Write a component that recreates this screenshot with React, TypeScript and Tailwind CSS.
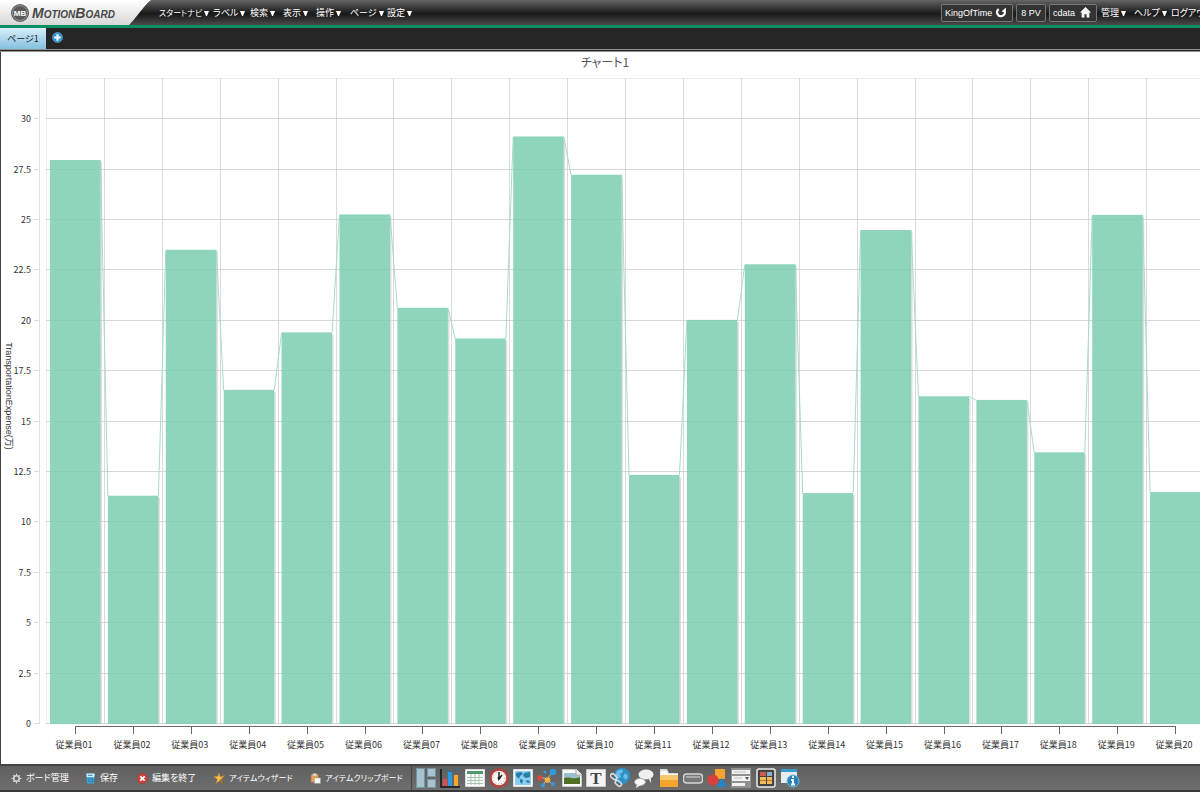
import React from "react";
import { useState } from "react";

const menus = [
  { label: "スタートナビ", size: "w-[54px] text-[8px]" },
  { label: "ラベル", size: "w-[37px] text-[9px]" },
  { label: "検索", size: "w-[33px] text-[9px]" },
  { label: "表示", size: "w-[33px] text-[9px]" },
  { label: "操作", size: "w-[34px] text-[9px]" },
  { label: "ページ", size: "w-[37px] text-[9px]" },
  { label: "設定", size: "w-[33px] text-[9px]" },
];

// values are in units of 10,000
const employees = [
  { name: "従業員01", value: 27.95 },
  { name: "従業員02", value: 11.3 },
  { name: "従業員03", value: 23.5 },
  { name: "従業員04", value: 16.55 },
  { name: "従業員05", value: 19.4 },
  { name: "従業員06", value: 25.25 },
  { name: "従業員07", value: 20.62 },
  { name: "従業員08", value: 19.1 },
  { name: "従業員09", value: 29.12 },
  { name: "従業員10", value: 27.22 },
  { name: "従業員11", value: 12.33 },
  { name: "従業員12", value: 20.02 },
  { name: "従業員13", value: 22.78 },
  { name: "従業員14", value: 11.43 },
  { name: "従業員15", value: 24.48 },
  { name: "従業員16", value: 16.23 },
  { name: "従業員17", value: 16.05 },
  { name: "従業員18", value: 13.45 },
  { name: "従業員19", value: 25.23 },
  { name: "従業員20", value: 11.48 },
];

const ticks = [0, 2.5, 5, 7.5, 10, 12.5, 15, 17.5, 20, 22.5, 25, 27.5, 30];

const BASE = 672;
const STEP = 57.9;
const yOf = (value: number) => BASE - value * 20.16;
const xOf = (index: number) => 50 + index * STEP;

const Chart = () => (
  <svg
    className="block w-full"
    viewBox="0 0 1200 712"
    role="img"
    aria-label="チャート1"
    fontFamily="'Noto Sans CJK JP', sans-serif"
    fontSize="9"
    fill="#333"
  >
    <text x="605" y="15" textAnchor="middle" fontSize="12" fill="#555">
      チャート1
    </text>
    <text
      transform="translate(6 344) rotate(90)"
      textAnchor="middle"
      fontFamily="'Liberation Sans', 'Noto Sans CJK JP', sans-serif"
    >
      TransportationExpense(万)
    </text>

    <path d="M46 26.500H1200M46.500 26V672" stroke="#eee" fill="none" />
    <path d="M39.500 26V672" stroke="#e2e2e2" />
    {ticks.map((tick) => (
      <g key={tick}>
        <path d={`M34 ${Math.round(yOf(tick)) - 0.5}h6`} stroke="#ddd" />
        <path
          d={`M46 ${Math.round(yOf(tick)) - 0.5}H1200`}
          stroke="#dedede"
        />
        <text x="31" y={Math.round(yOf(tick)) + 3} textAnchor="end">
          {tick}
        </text>
      </g>
    ))}
    {employees.slice(1).map((employee, i) => (
      <path
        key={employee.name}
        d={`M${Math.round(46 + (i + 1) * STEP) + 0.5} 26V672`}
        stroke="#dadada"
      />
    ))}

    {employees.map((employee, i) => {
      const x = xOf(i);
      const y = yOf(employee.value) - 0.5;
      const next = employees[i + 1];
      return (
        <g key={employee.name}>
          <rect x={x + 50} y={y + 2} width="2" height={BASE - y - 2} fill="#dedede" />
          <rect x={x} y={y} width="50.5" height={BASE - y} fill="#8fd5bc" />
          {next && (
            <path
              d={`M${x + 50.5} ${y}L${xOf(i + 1)} ${yOf(next.value)}`}
              stroke="#a5dcc8"
            />
          )}
          <path d={`M${Math.round(x) + 25.5} 674v8`} stroke="#666" />
          <text x={x + 24} y="696" textAnchor="middle">
            {employee.name}
          </text>
        </g>
      );
    })}
    {ticks.map((tick) => (
      <path
        key={tick}
        d={`M46 ${Math.round(yOf(tick)) - 0.5}H1200`}
        stroke="#000"
        strokeOpacity="0.03"
      />
    ))}
    <path d="M75 674.500H1175.500" stroke="#666" />
  </svg>
);

const Icon = ({
  children,
  className = "size-5",
}: {
  children: React.ReactNode;
  className?: string;
}) => (
  <svg className={`${className} shrink-0`} viewBox="0 0 20 20" fill="none" aria-hidden="true">
    {children}
  </svg>
);

const Caret = () => (
  <svg className="ml-0.5 inline-block h-[5px] w-[5px]" viewBox="0 0 5 5" aria-hidden="true">
    <path d="M0 0h5L3 5H2z" fill="white" />
  </svg>
);

const commands = [
  {
    label: "ボード管理",
    size: "w-[74px] text-[9px]",
    icon: (
      <Icon className="size-[11px]">
        <circle cx="10" cy="10" r="5" stroke="#d5d5d5" strokeWidth="3" />
        <path
          d="M10 1v4M10 15v4M1 10h4M15 10h4M4 4l2 2M14 14l2 2M16 4l-2 2M4 16l2-2"
          stroke="#d5d5d5"
          strokeWidth="2"
        />
      </Icon>
    ),
  },
  {
    label: "保存",
    size: "w-[52px] text-[9px]",
    icon: (
      <Icon className="size-[11px]">
        <path d="M2 1h16l-2 18H4z" fill="#48a9dc" />
        <path d="M3 1h14v6H3z" fill="#e9f7ff" />
        <path d="M5 4h9M7 11h7v5H7z" stroke="#267fae" strokeWidth="2" />
      </Icon>
    ),
  },
  {
    label: "編集を終了",
    size: "w-[77px] text-[9px]",
    icon: (
      <Icon className="size-[11px]">
        <circle cx="10" cy="10" r="9" fill="#d34340" stroke="#ac2929" />
        <path d="M6 6l8 8M14 6l-8 8" stroke="white" strokeWidth="3" />
      </Icon>
    ),
  },
  {
    label: "アイテムウィザード",
    size: "w-[96px] text-[8px]",
    icon: (
      <Icon className="size-[11px]">
        <path
          d="M9 0l2 7 8-2-6 6 4 8-7-5-6 5 2-8-6-4 7-1z"
          fill="#f5c24b"
          stroke="#be8526"
        />
        <path d="M11 12l7 7" stroke="#80592b" strokeWidth="2" />
      </Icon>
    ),
  },
  {
    label: "アイテムクリップボード",
    size: "w-[101px] text-[8px]",
    icon: (
      <Icon className="size-[11px]">
        <path d="M2 3h13v14H2z" fill="#e4a358" stroke="#b97b37" />
        <path d="M5 1h7v4H5z" fill="#ddd" />
        <path d="M8 9h11v10H8z" fill="#f7f7f7" stroke="#999" />
      </Icon>
    ),
  },
];

const items = [
  {
    label: "レイアウト",
    icon: (
      <>
        <path d="M0 0h9v20H0zM11 0h9v9h-9zM11 11h9v9h-9z" fill="#a6c3cf" />
        <path d="M.5.5h8v19h-8zM11.500.5h8v8h-8zM11.500 11.500h8v8h-8z" stroke="#7795a1" />
      </>
    ),
  },
  {
    label: "チャート",
    icon: (
      <>
        <path d="M3 11h4v7H3z" fill="#df4a45" />
        <path d="M8 4h4v14H8z" fill="#269be4" />
        <path d="M14 7h4v11h-4z" fill="#f5a62d" />
        <path d="M1 1v18h19" stroke="#151515" strokeWidth="1.500" />
        <path d="M3 5l4-3 4 2 4-2 4-2" stroke="#31718f" />
      </>
    ),
  },
  {
    label: "明細",
    icon: (
      <>
        <path d="M.5 1.500h19v17H.5z" fill="#fafafa" stroke="#ddd" />
        <path d="M2 3h16v3H2z" fill="#4f9a6b" />
        <path d="M2 9.500h16M2 12.500h16M2 15.500h16M6 6v11M10 6v11M14 6v11" stroke="#a6c4b0" />
      </>
    ),
  },
  {
    label: "時計",
    icon: (
      <>
        <circle cx="10" cy="10" r="8.500" fill="#f8f8f4" stroke="#b9403b" strokeWidth="2.500" />
        <circle cx="10" cy="10" r="6" stroke="#aaa" strokeDasharray="1 2" />
        <path d="M10 4v7l3-4" stroke="#222" strokeWidth="1.500" />
        <circle cx="10" cy="10" r="1.500" fill="#222" />
      </>
    ),
  },
  {
    label: "マップ",
    icon: (
      <>
        <path d="M.5 1.500h19v17H.5z" fill="#f8f8f8" stroke="#ddd" />
        <path d="M2 3h16v14H2z" fill="#8dccef" />
        <path d="M3 5l5-1 2 2-3 2-1 3-3-3zM11 5l6-1v5l-4 1-3-2zM7 11l3 1-1 4-2-2zM14 12l3 1-1 2-3-1z" fill="#247eac" />
      </>
    ),
  },
  {
    label: "ネットワーク",
    icon: (
      <>
        <path d="M3 9l7 2 6-7M10 11l5 5M10 11l-4 6" stroke="#b7bec2" />
        <circle cx="3" cy="10" r="2.800" fill="#dc4944" />
        <circle cx="10.500" cy="12" r="2.800" fill="#f4b43e" />
        <circle cx="16" cy="4" r="3.300" fill="#309bdd" />
        <circle cx="16" cy="16" r="2" fill="#309bdd" />
        <circle cx="6" cy="17.500" r="2" fill="#309bdd" />
        <circle cx="8" cy="4" r="1.500" fill="#309bdd" />
      </>
    ),
  },
  {
    label: "画像",
    icon: (
      <>
        <path d="M.5 1.500h14l5 5v12H.5z" fill="#f8f8f8" stroke="#ccc" />
        <path d="M2 5h12l4 3v3H2z" fill="#9bbfcd" />
        <path d="M2 10c5-2 10 2 16-1v7H2z" fill="#4e7023" />
        <path d="M14 1v6h6" fill="#eee" stroke="#aaa" />
      </>
    ),
  },
  {
    label: "テキスト",
    icon: (
      <>
        <path d="M.5 1.500h19v17H.5z" fill="#f4f4f4" stroke="#ccc" />
        <text
          x="10"
          y="16"
          textAnchor="middle"
          fontFamily="'Liberation Serif', serif"
          fontWeight="700"
          fontSize="17"
          fill="#444"
        >
          T
        </text>
      </>
    ),
  },
  {
    label: "リンク",
    icon: (
      <>
        <circle cx="12" cy="8" r="8" fill="#2c91cb" />
        <path d="M7 3l5-2 1 3-3 2 1 3-3 2-3-3zM15 5l3 3-2 4-3-3z" fill="#6dbbe6" />
        <rect x="0" y="7" width="7" height="4" rx="2" transform="rotate(40 4 9)" stroke="#ddd" strokeWidth="1.500" />
        <rect x="5" y="13" width="7" height="4" rx="2" transform="rotate(40 8 15)" stroke="#ddd" strokeWidth="1.500" />
        <path d="M5 11l2 2" stroke="#ddd" strokeWidth="1.500" />
      </>
    ),
  },
  {
    label: "コメント",
    icon: (
      <>
        <ellipse cx="12" cy="6.500" rx="7.500" ry="5" fill="#f0f0f0" />
        <path d="M14 10l3 5v-6" fill="#e4e4e4" />
        <ellipse cx="6" cy="14" rx="5.500" ry="3.500" fill="#fafafa" stroke="#aaa" />
        <path d="M3 16l-1 4 5-3" fill="#eee" />
      </>
    ),
  },
  {
    label: "フォルダ",
    icon: (
      <>
        <path d="M1 1h7l2 4h9v14H1z" fill="#d9dcda" />
        <path d="M2 3h5l2 3h10v2H1z" fill="#fff" />
        <path d="M1 7h18v12H1z" fill="#f5a52d" />
        <path d="M1 7h18v5H1z" fill="#fac66d" />
      </>
    ),
  },
  {
    label: "ボタン",
    icon: (
      <>
        <rect x=".5" y="6" width="19" height="9" rx="3" fill="#777" stroke="#d5d5d5" strokeWidth="1.500" />
        <path d="M3 8h14v2H3z" fill="#aaa" />
      </>
    ),
  },
  {
    label: "図形",
    icon: (
      <>
        <path d="M8 1h10v10H8z" fill="#f5a52d" />
        <circle cx="6" cy="12" r="5.500" fill="#d9403d" />
        <path d="M15 10l5 9H9z" fill="#2784c7" />
      </>
    ),
  },
  {
    label: "入力フォーム",
    icon: (
      <>
        <path d="M0 0h20v20H0z" fill="#909090" />
        <path d="M1 2h18v4H1zM1 8h18v5H1zM1 15h13v3H1z" fill="#f2f2f2" />
        <path d="M14 9h4l-2 3z" fill="#555" />
        <path d="M3 4h12M3 10h8" stroke="#bbb" />
      </>
    ),
  },
  {
    label: "パネル",
    icon: (
      <>
        <rect x="1" y="1" width="18" height="18" rx="2" fill="#444" stroke="#ededed" strokeWidth="1.500" />
        <path d="M4 4h6v4H4z" fill="#d25b50" />
        <path d="M11 4h5v4h-5z" fill="#80b4d3" />
        <path d="M4 9h6v7H4zM11 9h5v7h-5z" fill="#f5ba59" />
        <path d="M4 12.500h6M11 12.500h5" stroke="#b77b29" />
      </>
    ),
  },
  {
    label: "情報",
    icon: (
      <>
        <path d="M1 1h16v14H1z" fill="#e6edf0" />
        <path d="M1 1h16v3H1z" fill="#3a9bcf" />
        <circle cx="13" cy="13" r="6" fill="#2782bc" stroke="#77badf" />
        <path d="M13 8v2M11 12h2v5M11 16.500h4" stroke="white" strokeWidth="1.800" />
      </>
    ),
  },
];

const Logo = () => (
  <a href="#" className="relative flex h-[26px] w-[151px] shrink-0 items-center gap-[3px] pl-[11px]">
    <svg className="absolute inset-0 size-full" viewBox="0 0 151 26" aria-hidden="true">
      <defs>
        <linearGradient id="plate" x1="0" y1="0" x2="0" y2="1">
          <stop stopColor="#fff" />
          <stop offset="1" stopColor="#d6d6d6" />
        </linearGradient>
      </defs>
      <path d="M0 0h151c-5 3-17 21-23 26H0z" fill="url(#plate)" />
    </svg>
    <svg className="relative size-[18px] shrink-0" viewBox="0 0 18 18" aria-hidden="true">
      <circle cx="9" cy="9" r="9" fill="#5b5b5b" />
      <circle cx="9" cy="9" r="7.500" fill="none" stroke="#aaa" strokeWidth=".7" />
      <text
        x="9"
        y="12"
        textAnchor="middle"
        fontFamily="'Liberation Sans', sans-serif"
        fontSize="8"
        fontWeight="700"
        fill="white"
      >
        MB
      </text>
    </svg>
    <span className="relative font-['Liberation_Sans',sans-serif] text-[14px] leading-4 font-bold text-[#484848] italic [font-variant:small-caps]">
      MotionBoard
    </span>
  </a>
);

const Header = () => (
  <header className="flex h-7 shrink-0 items-start overflow-hidden border-b-3 border-[#0a8f63] bg-linear-to-b from-[#666] via-[#191919] via-55% to-[#4b4b4b]">
    <Logo />
    <nav className="flex h-[25px] shrink-0 pl-2">
      {menus.map((menu) => (
        <button key={menu.label} className={`${menu.size} shrink-0 text-left whitespace-nowrap`}>
          {menu.label}
          <Caret />
        </button>
      ))}
    </nav>
    <div className="ml-auto flex h-[25px] shrink-0 items-center whitespace-nowrap">
      <button className="mr-[3px] flex h-[18px] w-[72px] items-center justify-between rounded-xs border border-[#777] bg-[#333] pr-[5px] pl-[3px] font-['Liberation_Sans',sans-serif]">
        KingOfTime
        <Icon className="size-[11px]">
          <path d="M5 4a7 7 0 1 0 11 5" stroke="white" strokeWidth="4" />
          <path d="M10 8l8-7v9z" fill="white" />
        </Icon>
      </button>
      <button className="mr-[3px] h-[18px] w-[30px] rounded-xs border border-[#777] bg-[#333] font-['Liberation_Sans',sans-serif]">
        8 PV
      </button>
      <button className="mr-1 flex h-[18px] w-12 items-center justify-between rounded-xs border border-[#777] bg-[#333] pr-[5px] pl-[3px] font-['Liberation_Sans',sans-serif]">
        cdata
        <Icon className="size-[11px]">
          <path d="M10 0L0 10h3v9h5v-6h4v6h5v-9h3z" fill="white" />
        </Icon>
      </button>
      <button className="w-[33px] text-left">
        管理
        <Caret />
      </button>
      <button className="w-[37px] text-left">
        ヘルプ
        <Caret />
      </button>
      <a href="#" className="w-[29px] overflow-hidden">
        ログアウト
      </a>
    </div>
  </header>
);

const App = () => {
  const [page, setPage] = useState(1);

  return (
    <div className="flex min-h-screen flex-col bg-white font-['Noto_Sans_CJK_JP',sans-serif] text-[9px] leading-3 text-white [font-feature-settings:'palt']">
      <Header />
      <div className="flex h-6 shrink-0 items-stretch border-b-3 border-double border-[#929292] bg-[#262626]">
        <button
          aria-pressed={page === 1}
          className="w-[46px] bg-linear-to-b from-[#d8effa] to-[#83c0e0] text-[#222]"
          onClick={() => setPage(1)}
        >
          ページ1
        </button>
        <button aria-label="ページを追加" className="ml-1.5 flex items-center pb-0.5">
          <Icon className="size-[11px]">
            <circle cx="10" cy="10" r="9" fill="#258ed0" stroke="#85c8ef" />
            <path d="M10 4v12M4 10h12" stroke="white" strokeWidth="4" />
          </Icon>
        </button>
      </div>
      <main className="flex-1 shadow-[inset_1px_0_#444]">
        <Chart />
      </main>
      <footer className="flex h-7 shrink-0 items-center overflow-hidden border-y-2 border-t-[#444] border-b-[#383838] bg-linear-to-b from-[#606060] to-[#6e6e6e] pl-[11px]">
        <div className="flex h-full shrink-0 items-center border-r border-[#444]">
          {commands.map((command) => (
            <button
              key={command.label}
              className={`${command.size} flex shrink-0 items-center gap-1 whitespace-nowrap`}
            >
              {command.icon}
              {command.label}
            </button>
          ))}
        </div>
        <div className="flex w-[388px] shrink-0 justify-between pl-1">
          {items.map((item) => (
            <button key={item.label} aria-label={item.label} title={item.label} className="size-5">
              <Icon>{item.icon}</Icon>
            </button>
          ))}
        </div>
      </footer>
    </div>
  );
};

export default App;
